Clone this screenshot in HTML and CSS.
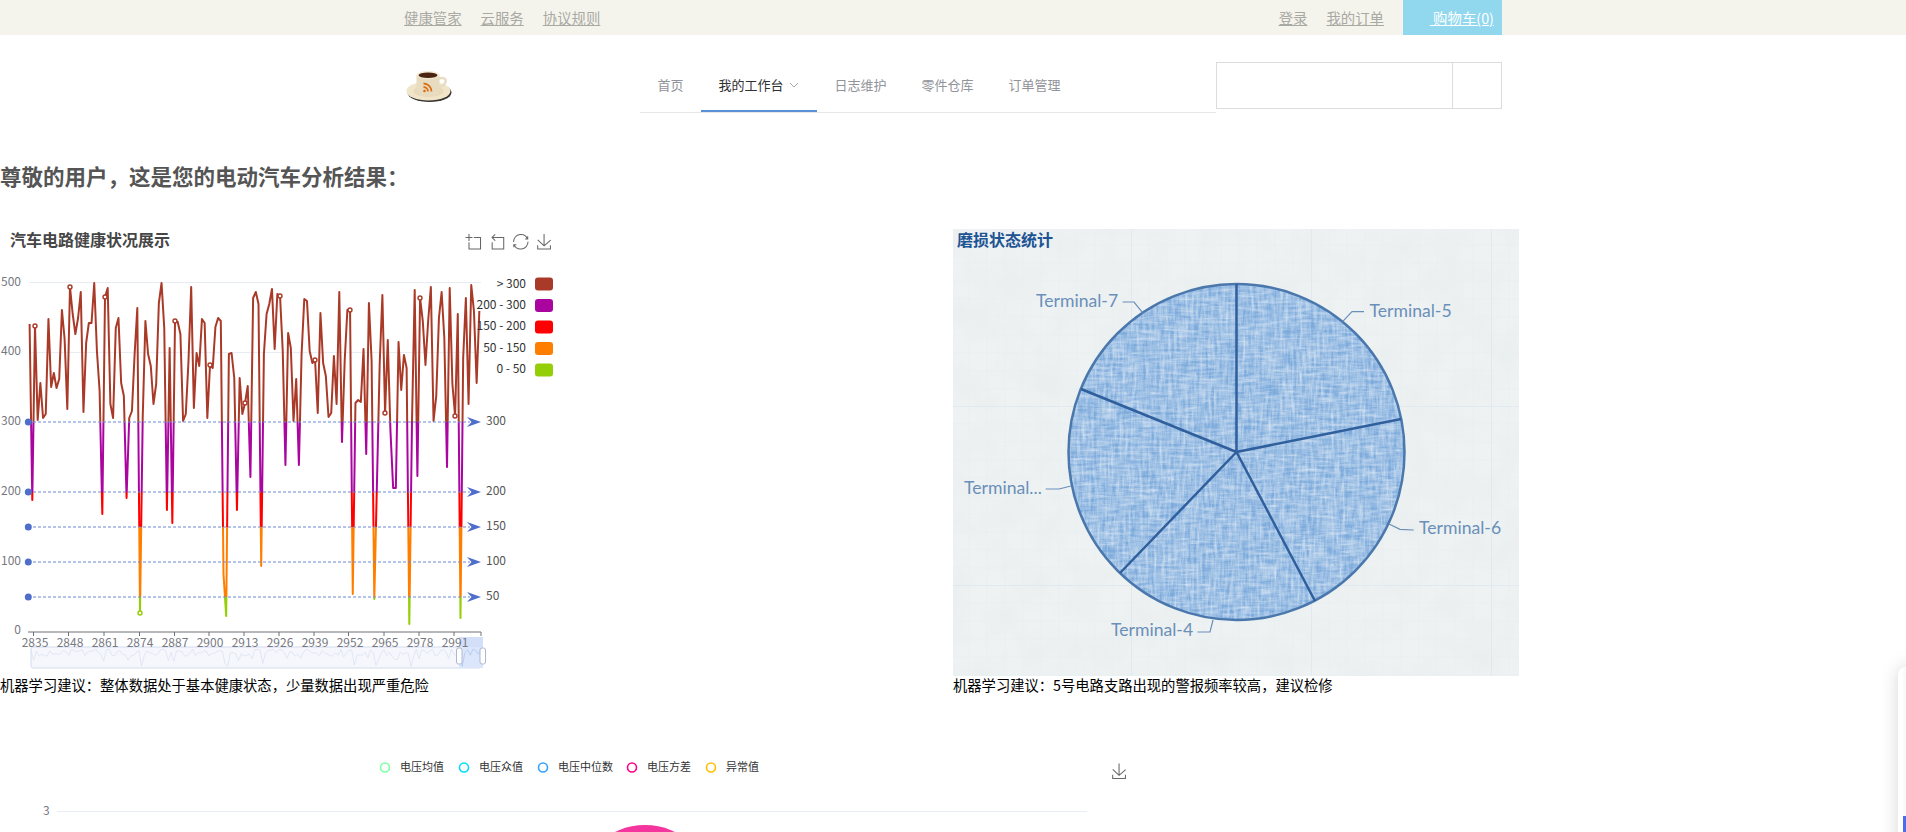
FILE: index.html
```html
<!DOCTYPE html>
<html lang="zh-CN">
<head>
    <meta charset="UTF-8">
    <meta name="viewport" content="width=device-width, initial-scale=1.0">
    <title>电动汽车分析结果</title>
    <link rel="stylesheet" href="styles.css">
</head>
<body>

<div class="topbar">
    <div class="topbar-inner">
        <div class="top-links">
            <a href="#">健康管家</a>
            <a href="#">云服务</a>
            <a href="#">协议规则</a>
        </div>
        <div class="top-links">
            <a href="#">登录</a>
            <a href="#">我的订单</a>
            <div class="cart"><a href="#">&nbsp;购物车(0)</a></div>
        </div>
    </div>
</div>

<div class="header">
    <div class="logo">
        <svg width="50" height="46" viewBox="0 0 50 46">
            <ellipse cx="25.500" cy="30.500" rx="22" ry="9.500" fill="#37342f"/>
            <ellipse cx="24.500" cy="29" rx="22" ry="9.500" fill="#f0e5c8"/>
            <ellipse cx="24.500" cy="29" rx="15" ry="6" fill="#e6dab9"/>
            <path d="M34 17c5-2.500 8.500 0 7.500 3s-4 5-7.500 5" fill="none" stroke="#e8ddc2" stroke-width="2.500"/>
            <path d="M12.500 13v15c0 4 5 6 11.500 6s11.500-2 11.500-6V13z" fill="#e8dcc0"/>
            <ellipse cx="24" cy="13" rx="11.500" ry="4" fill="#f3ead6"/>
            <ellipse cx="24" cy="13.300" rx="9.500" ry="2.800" fill="#4a2411"/>
            <circle cx="20.500" cy="29" r="1.300" fill="#dc6d12"/>
            <path d="M19.500 25a4.500 4.500 0 0 1 4.500 4.500M19.500 21.500a8 8 0 0 1 8 8" fill="none" stroke="#dc6d12" stroke-width="1.800"/>
        </svg>
    </div>
    <ul class="nav">
        <li class="nav-item">首页</li>
        <li class="nav-item active">我的工作台
            <svg class="nav-arrow" width="10" height="6" viewBox="0 0 10 6"><path d="M1 1l4 4 4-4" fill="none" stroke="#a6a9ad"/></svg>
        </li>
        <li class="nav-item">日志维护</li>
        <li class="nav-item">零件仓库</li>
        <li class="nav-item">订单管理</li>
    </ul>
    <div class="search">
        <div class="search-input"></div>
        <div class="search-btn"></div>
    </div>
</div>

<h2 class="page-title">尊敬的用户，这是您的电动汽车分析结果：</h2>

<div class="chart-row">
    <div class="panel">
        <svg class="chart" width="560" height="457" viewBox="0 218 560 457">
            <defs>
                <linearGradient id="levels" gradientUnits="userSpaceOnUse" x1="0" y1="0" x2="0" y2="700">
                    <stop offset=".6014" stop-color="#aa3a28"/>
                    <stop offset=".6014" stop-color="#aa069f"/>
                    <stop offset=".7014" stop-color="#aa069f"/>
                    <stop offset=".7014" stop-color="#ff0000"/>
                    <stop offset=".7514" stop-color="#ff0000"/>
                    <stop offset=".7514" stop-color="#ff7e00"/>
                    <stop offset=".8514" stop-color="#ff7e00"/>
                    <stop offset=".8514" stop-color="#93ce07"/>
                </linearGradient>
                <polyline id="series" class="series" points="0,323 1,499 2,325 3,419 4,382 5,417 6,413 7,318 8,386 9,372 10,387 11,378 12,309 13,338 14,408 15,286 16,313 17,333 18,317 19,291 20,411 21,342 22,322 23,322 24,282 25,350 26,390 27,513 28,296 29,287 30,403 31,417 32,327 33,317 34,382 35,395 36,497 37,417 38,410 39,353 40,307 41,612 42,417 43,320 44,353 45,365 46,403 47,383 48,302 49,282 50,327 51,509 52,347 53,522 54,320 55,321 56,333 57,420 58,413 59,360 60,286 61,407 62,352 63,365 64,318 65,322 66,417 67,364 68,367 69,326 70,317 71,320 72,573 73,615 74,353 75,352 76,377 77,509 78,377 79,413 80,402 81,385 82,476 83,297 84,291 85,303 86,565 87,353 88,313 89,303 90,288 91,348 92,293 93,295 94,350 95,464 96,332 97,347 98,420 99,378 100,464 101,353 102,298 103,300 104,350 105,362 106,359 107,412 108,312 109,362 110,375 111,416 112,412 113,355 114,403 115,291 116,441 117,360 118,309 119,309 120,593 121,402 122,399 123,401 124,348 125,453 126,302 127,360 128,598 129,480 130,363 131,294 132,412 133,339 134,430 135,487 136,487 137,341 138,389 139,354 140,367 141,623 142,420 143,289 144,475 145,297 146,320 147,364 148,320 149,286 150,420 151,395 152,317 153,291 154,337 155,466 156,287 157,383 158,415 159,313 160,617 161,357 162,297 163,403 164,284 165,310 166,382 167,310"/>
                <clipPath id="zoomWindow"><rect x="459" y="636" width="24" height="31"/></clipPath>
            </defs>

            <text class="chart-title" x="10" y="244.500">汽车电路健康状况展示</text>

            <g class="tool" transform="translate(465.500 233) scale(.259)"><path d="M0,13.500h26.900 M13.500,26.900V0 M32.100,13.500H58V58H13.500 V32.100"/></g>
            <g class="tool" transform="translate(489.500 233) scale(.259)"><path d="M22,1.400L9.900,13.500l12.300,12.300 M10.300,13.500H54.900v44.600 H10.300v-26"/></g>
            <g class="tool" transform="translate(513 233) scale(.259)"><path d="M47,18.900h9.800V8.700 M56.300,20.100 C52.100,9,40.500,0.600,26.800,2.100C12.600,3.700,1.600,16.200,2.100,30.600 M13,41.100H3.100v10.200 M3.700,39.900c4.200,11.100,15.800,19.500,29.500,18 c14.200-1.600,25.200-14.100,24.700-28.500"/></g>
            <g class="tool" transform="translate(536.500 233) scale(.259)"><path d="M4.700,22.900L29.300,45.500L54.700,23.400M4.600,43.600L4.600,58L53.800,58L53.800,43.600M29.200,45.100L29.200,0"/></g>

            <line class="grid-line" x1="29" y1="281.500" x2="481" y2="281.500"/>
            <line class="grid-line" x1="29" y1="351.500" x2="481" y2="351.500"/>

            <g class="axis-label" text-anchor="end">
                <text x="21" y="285">500</text>
                <text x="21" y="354">400</text>
                <text x="21" y="424">300</text>
                <text x="21" y="494">200</text>
                <text x="21" y="564">100</text>
                <text x="21" y="633">0</text>
            </g>

            <use href="#series" stroke="url(#levels)" class="series-line" transform="translate(29.600 0) scale(2.693 1)"/>

            <g class="marks" stroke="#aa3a28">
                <circle cx="35" cy="325" r="2"/>
                <circle cx="70" cy="286" r="2"/>
                <circle cx="105" cy="296" r="2"/>
                <circle cx="140" cy="612" r="2" stroke="#93ce07"/>
                <circle cx="175" cy="320" r="2"/>
                <circle cx="210" cy="364" r="2"/>
                <circle cx="245" cy="402" r="2"/>
                <circle cx="280" cy="295" r="2"/>
                <circle cx="315" cy="359" r="2"/>
                <circle cx="350" cy="309" r="2"/>
                <circle cx="385" cy="412" r="2"/>
                <circle cx="420" cy="297" r="2"/>
                <circle cx="455" cy="415" r="2"/>
            </g>

            <g class="mark-line">
                <line x1="28" y1="421" x2="470" y2="421"/>
                <line x1="28" y1="491" x2="470" y2="491"/>
                <line x1="28" y1="526" x2="470" y2="526"/>
                <line x1="28" y1="561" x2="470" y2="561"/>
                <line x1="28" y1="596" x2="470" y2="596"/>
            </g>
            <g class="mark-end">
                <circle cx="28.300" cy="421" r="3.500"/>
                <circle cx="28.300" cy="491" r="3.500"/>
                <circle cx="28.300" cy="526" r="3.500"/>
                <circle cx="28.300" cy="561" r="3.500"/>
                <circle cx="28.300" cy="596" r="3.500"/>
                <path d="M467 416l14 5-14 5 4.500-5z"/>
                <path d="M467 486l14 5-14 5 4.500-5z"/>
                <path d="M467 521l14 5-14 5 4.500-5z"/>
                <path d="M467 556l14 5-14 5 4.500-5z"/>
                <path d="M467 591l14 5-14 5 4.500-5z"/>
            </g>
            <g class="mark-label">
                <text x="486" y="424">300</text>
                <text x="486" y="494">200</text>
                <text x="486" y="529">150</text>
                <text x="486" y="564">100</text>
                <text x="486" y="599">50</text>
            </g>

            <g class="piece-label" text-anchor="end">
                <text x="526" y="286.500">&gt; 300</text>
                <text x="526" y="308">200 - 300</text>
                <text x="526" y="329">150 - 200</text>
                <text x="526" y="350.500">50 - 150</text>
                <text x="526" y="372">0 - 50</text>
            </g>
            <rect x="535" y="276.500" width="18" height="13" rx="3" fill="#aa3a28"/>
            <rect x="535" y="298" width="18" height="13" rx="3" fill="#aa069f"/>
            <rect x="535" y="319.500" width="18" height="13" rx="3" fill="#ff0000"/>
            <rect x="535" y="341" width="18" height="13" rx="3" fill="#ff7e00"/>
            <rect x="535" y="362.500" width="18" height="13" rx="3" fill="#93ce07"/>

            <line class="axis-line" x1="28" y1="631" x2="481" y2="631"/>
            <path class="axis-line" d="M33.500 631v4M68.500 631v4M104 631v4M139.500 631v4M174.500 631v4M209 631v4M244 631v4M279 631v4M314 631v4M348.500 631v4M384 631v4M419 631v4M454 631v4M481 631v4"/>

            <rect class="zoom-track" x="31" y="646" width="450" height="21" rx="2"/>
            <use href="#series" stroke="#d7dff0" class="series-spark" transform="translate(31 633.450) scale(2.695 .0516)"/>
            <rect class="zoom-window" x="459" y="646" width="24" height="21"/>
            <rect class="zoom-window-top" x="459" y="636" width="24" height="10"/>
            <g clip-path="url(#zoomWindow)">
                <use href="#series" stroke="#a9c2f2" class="series-spark" transform="translate(31 633.450) scale(2.695 .0516)"/>
            </g>
            <rect class="zoom-handle" x="456.500" y="647" width="5.500" height="16" rx="2"/>
            <rect class="zoom-handle" x="480" y="647" width="5.500" height="16" rx="2"/>

            <g class="axis-label" text-anchor="middle">
                <text x="35" y="645.500">2835</text>
                <text x="70" y="645.500">2848</text>
                <text x="105" y="645.500">2861</text>
                <text x="140" y="645.500">2874</text>
                <text x="175" y="645.500">2887</text>
                <text x="210" y="645.500">2900</text>
                <text x="245" y="645.500">2913</text>
                <text x="280" y="645.500">2926</text>
                <text x="315" y="645.500">2939</text>
                <text x="350" y="645.500">2952</text>
                <text x="385" y="645.500">2965</text>
                <text x="420" y="645.500">2978</text>
                <text x="455" y="645.500">2991</text>
            </g>
        </svg>
        <p class="advice">机器学习建议：整体数据处于基本健康状态，少量数据出现严重危险</p>
    </div>

    <div class="panel">
        <svg class="chart wear-chart" width="566" height="457" viewBox="953 218 566 457">
            <defs>
                <pattern id="paper" patternUnits="userSpaceOnUse" x="951" y="226" width="180" height="179">
                    <path d="M18 0v179M36 0v179M54 0v179M72 0v179M90 0v179M108 0v179M126 0v179M144 0v179M162 0v179M0 18h180M0 36h180M0 54h180M0 72h180M0 90h180M0 108h180M0 126h180M0 144h180M0 162h180" fill="none" stroke="#e9eff1"/>
                    <path d="M0 0v179M0 0h180" fill="none" stroke="#d3e2ec"/>
                </pattern>
                <filter id="weave" x="0" y="0" width="100%" height="100%" color-interpolation-filters="sRGB">
                    <feTurbulence type="fractalNoise" baseFrequency=".35 .05" numOctaves="3" seed="4" result="strandsA"/>
                    <feTurbulence type="fractalNoise" baseFrequency=".05 .35" numOctaves="3" seed="9" result="strandsB"/>
                    <feBlend in="strandsA" in2="strandsB" mode="screen" result="strands"/>
                    <feColorMatrix in="strands" type="matrix" values="0 0 0 0 1  0 0 0 0 1  0 0 0 0 1  1.300 0 0 0 -.480" result="light"/>
                    <feComposite in="light" in2="SourceAlpha" operator="in" result="lightInPie"/>
                    <feMerge>
                        <feMergeNode in="SourceGraphic"/>
                        <feMergeNode in="lightInPie"/>
                    </feMerge>
                </filter>
                <filter id="grain" x="0" y="0" width="100%" height="100%" color-interpolation-filters="sRGB">
                    <feTurbulence type="fractalNoise" baseFrequency=".03" numOctaves="4" seed="2"/>
                    <feColorMatrix type="matrix" values="0 0 0 0 .85  0 0 0 0 .87  0 0 0 0 .87  .9 0 0 0 -.3"/>
                </filter>
            </defs>

            <rect x="953" y="228" width="566" height="447" fill="#eef2f3"/>
            <rect x="953" y="228" width="566" height="447" filter="url(#grain)" opacity=".4"/>
            <rect x="953" y="228" width="566" height="447" fill="url(#paper)"/>

            <text class="wear-title" x="957" y="244.500">磨损状态统计</text>

            <circle class="pie-fill" cx="1236.500" cy="451" r="168" filter="url(#weave)"/>
            <circle class="pie-edge" cx="1236.500" cy="451" r="168"/>
            <path class="pie-spoke" d="M1236.500 451L1236.500 283M1236.500 451L1401 418M1236.500 451L1315 600M1236.500 451L1120 572M1236.500 451L1081 388"/>

            <path class="leader" d="M1122.600 301h11.400l8.600 10.700M1364 310.700h-12l-9.400 10M1413.700 529l-13.700-.7-11-5.300M1045.600 488h13.400l12-3M1197.400 631H1210l3-12"/>
            <g class="pie-label">
                <text x="1036" y="306">Terminal-7</text>
                <text x="1369.500" y="316">Terminal-5</text>
                <text x="1419" y="533">Terminal-6</text>
                <text x="964" y="493">Terminal...</text>
                <text x="1111" y="635">Terminal-4</text>
            </g>
        </svg>
        <p class="advice">机器学习建议：5号电路支路出现的警报频率较高，建议检修</p>
    </div>
</div>

<svg class="chart" width="1140" height="136" viewBox="0 696 1140 136">
    <g class="legend-ring">
        <circle cx="385" cy="766.500" r="4.500" stroke="#80ffa5"/>
        <circle cx="464" cy="766.500" r="4.500" stroke="#00ddff"/>
        <circle cx="543" cy="766.500" r="4.500" stroke="#37a2ff"/>
        <circle cx="632" cy="766.500" r="4.500" stroke="#ff0087"/>
        <circle cx="711" cy="766.500" r="4.500" stroke="#ffbf00"/>
    </g>
    <g class="legend-label">
        <text x="400" y="770">电压均值</text>
        <text x="479" y="770">电压众值</text>
        <text x="558" y="770">电压中位数</text>
        <text x="647" y="770">电压方差</text>
        <text x="726" y="770">异常值</text>
    </g>
    <g class="tool" transform="translate(1111.500 762.500) scale(.259)"><path d="M4.700,22.900L29.300,45.500L54.700,23.400M4.600,43.600L4.600,58L53.800,58L53.800,43.600M29.200,45.100L29.200,0"/></g>
    <text class="axis-label" x="43" y="814">3</text>
    <line class="grid-line" x1="57" y1="810.500" x2="1087" y2="810.500"/>
    <circle cx="645" cy="892" r="68" fill="#f4359e"/>
</svg>

<div class="side-card"><div class="side-card-tab"></div></div>

</body>
</html>
```

FILE: styles.css
```css
html, body {
    height: 832px;
    overflow: hidden;
}

body {
    margin: 0;
    background-color: #fff;
    font-family: "Noto Sans CJK SC", "Noto Sans", sans-serif;
}

.topbar {
    height: 35px;
    background-color: #f5f4ec;
    font-size: 14.400px;
}

.topbar-inner {
    display: flex;
    justify-content: space-between;
    width: 1098px;
    margin-left: 404px;
}

.top-links {
    display: flex;
    gap: 19px;
    line-height: 35px;
}

.top-links a {
    color: #a9a9a4;
}

.cart {
    width: 99px;
    height: 35px;
    box-sizing: border-box;
    padding-right: 8px;
    text-align: right;
    background-color: #91d7ee;
}

.top-links .cart a {
    color: #fff;
}

.header {
    display: flex;
    align-items: flex-start;
    margin-left: 400px;
    width: 1102px;
}

.logo {
    width: 240px;
    height: 77px;
    padding-top: 27px;
    padding-left: 4px;
    box-sizing: border-box;
}

.nav {
    display: flex;
    width: 576px;
    height: 54px;
    margin: 23px 0 0;
    padding: 0;
    list-style: none;
    border-bottom: 1px solid #e6e6e6;
    box-sizing: content-box;
}

.nav-item {
    height: 54px;
    box-sizing: border-box;
    padding: 0 17.500px;
    line-height: 54px;
    font-size: 13px;
    color: #909399;
}

.nav-item.active {
    color: #303133;
    border-bottom: 2px solid #5b90d8;
}

.nav-arrow {
    margin-left: 3px;
    vertical-align: 2px;
}

.search {
    display: flex;
    width: 286px;
    height: 47px;
    margin-top: 27px;
    box-sizing: border-box;
    border: 1px solid #dcdcdc;
}

.search-input {
    flex: 1;
}

.search-btn {
    width: 48px;
    border-left: 1px solid #dcdcdc;
}

.page-title {
    margin: 48px 0 28px;
    font-size: 21.500px;
    line-height: 30px;
    font-weight: bold;
    color: #555;
}

.chart-row {
    display: flex;
}

.panel {
    width: 953px;
}

.chart {
    display: block;
}

.advice {
    margin: 0;
    height: 21px;
    font-size: 14.300px;
    line-height: 18px;
    color: #000;
}

.chart-title {
    font-size: 16px;
    font-weight: bold;
    fill: #464646;
}

.tool path {
    fill: none;
    stroke: #666;
    stroke-width: 4;
}

.grid-line {
    stroke: #e8ecf3;
}

.axis-label text,
text.axis-label {
    font-size: 12px;
    fill: #777982;
}

.axis-line {
    fill: none;
    stroke: #6e7079;
}

.series {
    fill: none;
    vector-effect: non-scaling-stroke;
}

.series-line {
    stroke-width: 2;
    stroke-linejoin: round;
}

.series-spark {
    stroke-width: .800;
    opacity: .9;
}

.marks circle {
    fill: #fff;
    stroke-width: 1.400;
}

.mark-line line {
    stroke: #6d87d4;
    stroke-dasharray: 3 2;
}

.mark-end circle,
.mark-end path {
    fill: #4f6ecb;
}

.mark-label text {
    font-size: 12px;
    fill: #555;
}

.piece-label text {
    font-size: 12px;
    fill: #333;
}

.zoom-track {
    fill: #f6f7fc;
    stroke: #d2dbee;
}

.zoom-window {
    fill: #dbe6fb;
}

.zoom-window-top {
    fill: #d3dff8;
}

.zoom-handle {
    fill: #fff;
    stroke: #acb8d1;
}

.wear-title {
    font-size: 16px;
    font-weight: bold;
    fill: #1e5493;
}

.pie-fill {
    fill: #7dabdc;
}

.pie-edge {
    fill: none;
    stroke: #4a78ad;
    stroke-width: 2.500;
}

.pie-spoke {
    fill: none;
    stroke: #2f5f9c;
    stroke-width: 2.500;
}

.leader {
    fill: none;
    stroke: #6a8fb9;
    stroke-width: 1.200;
}

.pie-label text {
    font-family: Lato, "Open Sans", sans-serif;
    font-size: 17.600px;
    fill: #6a8fb9;
}

.legend-ring circle {
    fill: #fff;
    stroke-width: 1.600;
}

.legend-label text {
    font-size: 11px;
    fill: #333;
}

.side-card {
    position: fixed;
    top: 667px;
    left: 1898px;
    width: 40px;
    height: 200px;
    box-sizing: border-box;
    padding-left: 5px;
    background-color: #fff;
    border-radius: 8px;
    box-shadow: 0 0 18px rgba(0, 0, 0, 0.16);
}

.side-card-tab {
    height: 149px;
    border-top-left-radius: 4px;
    border-bottom: 16px solid #4a6cf0;
    background-color: #fafafa;
}
```
